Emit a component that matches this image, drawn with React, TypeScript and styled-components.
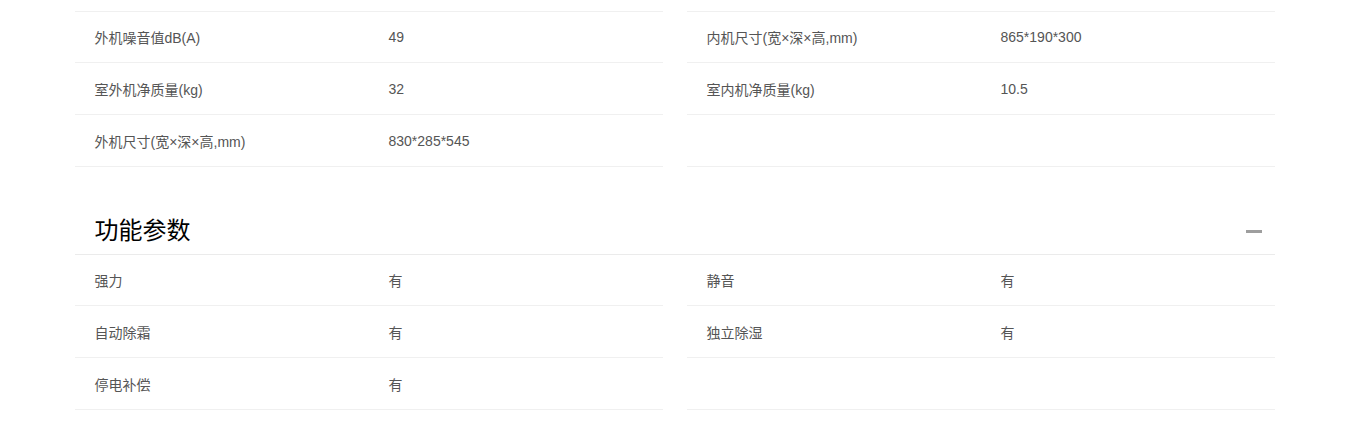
import styled, { createGlobalStyle } from "styled-components";

const GlobalStyle = createGlobalStyle`
    body {
        margin: 0;
        background: #fff;
        font-family: "Liberation Sans", "Noto Sans CJK SC", sans-serif;
    }
`;

type Spec = { label: string; value: string };

const sizeSpecs: Spec[] = [
    { label: "外机噪音值dB(A)", value: "49" },
    { label: "内机尺寸(宽×深×高,mm)", value: "865*190*300" },
    { label: "室外机净质量(kg)", value: "32" },
    { label: "室内机净质量(kg)", value: "10.5" },
    { label: "外机尺寸(宽×深×高,mm)", value: "830*285*545" },
    { label: "", value: "" },
];

const funcSpecs: Spec[] = [
    { label: "强力", value: "有" },
    { label: "静音", value: "有" },
    { label: "自动除霜", value: "有" },
    { label: "独立除湿", value: "有" },
    { label: "停电补偿", value: "有" },
    { label: "", value: "" },
];

const SpecGrid = ({ list, topLine }: { list: Spec[]; topLine?: boolean }) => (
    <Grid $underHeader={!topLine}>
        {list.map((item, index) => (
            <Row key={index} $topLine={topLine && index < 2}>
                <Cell>{item.label}</Cell>
                <Cell>{item.value}</Cell>
            </Row>
        ))}
    </Grid>
);

const App = () => {
    return (
        <Wrap>
            <GlobalStyle />
            <SpecGrid list={sizeSpecs} topLine />
            <Section>
                <Header>
                    <Title>功能参数</Title>
                    <Toggle aria-label="collapse" />
                </Header>
                <SpecGrid list={funcSpecs} />
            </Section>
        </Wrap>
    );
};

export default App;

const Wrap = styled.div`
    width: 1200px;
    margin: 0 auto;
    padding: 11px 0 15px;
`;

const Grid = styled.div<{ $underHeader?: boolean }>`
    display: grid;
    grid-template-columns: 1fr 1fr;
    column-gap: 24px;
    margin-top: ${(p) => (p.$underHeader ? "-1px" : "0")};
`;

const Row = styled.div<{ $topLine?: boolean }>`
    box-sizing: border-box;
    display: grid;
    grid-template-columns: 1fr 1fr;
    height: 52px;
    align-items: center;
    border-bottom: 1px solid #f0f0f0;
    border-top: ${(p) => (p.$topLine ? "1px solid #f0f0f0" : "none")};
`;

const Cell = styled.div`
    padding: 0 20px;
    font-size: 14px;
    color: #555;
    white-space: nowrap;
`;

const Section = styled.div`
    margin-top: 39px;
`;

const Header = styled.div`
    display: flex;
    align-items: center;
    justify-content: space-between;
    height: 48px;
    padding: 0 13px 0 20px;
    border-bottom: 1px solid #ebebeb;
`;

const Title = styled.h3`
    margin: 0 0 3px;
    font-size: 24px;
    font-weight: normal;
    color: #000;
`;

const Toggle = styled.span`
    display: block;
    width: 16px;
    height: 3px;
    margin-top: 2px;
    background: #9e9e9e;
`;
